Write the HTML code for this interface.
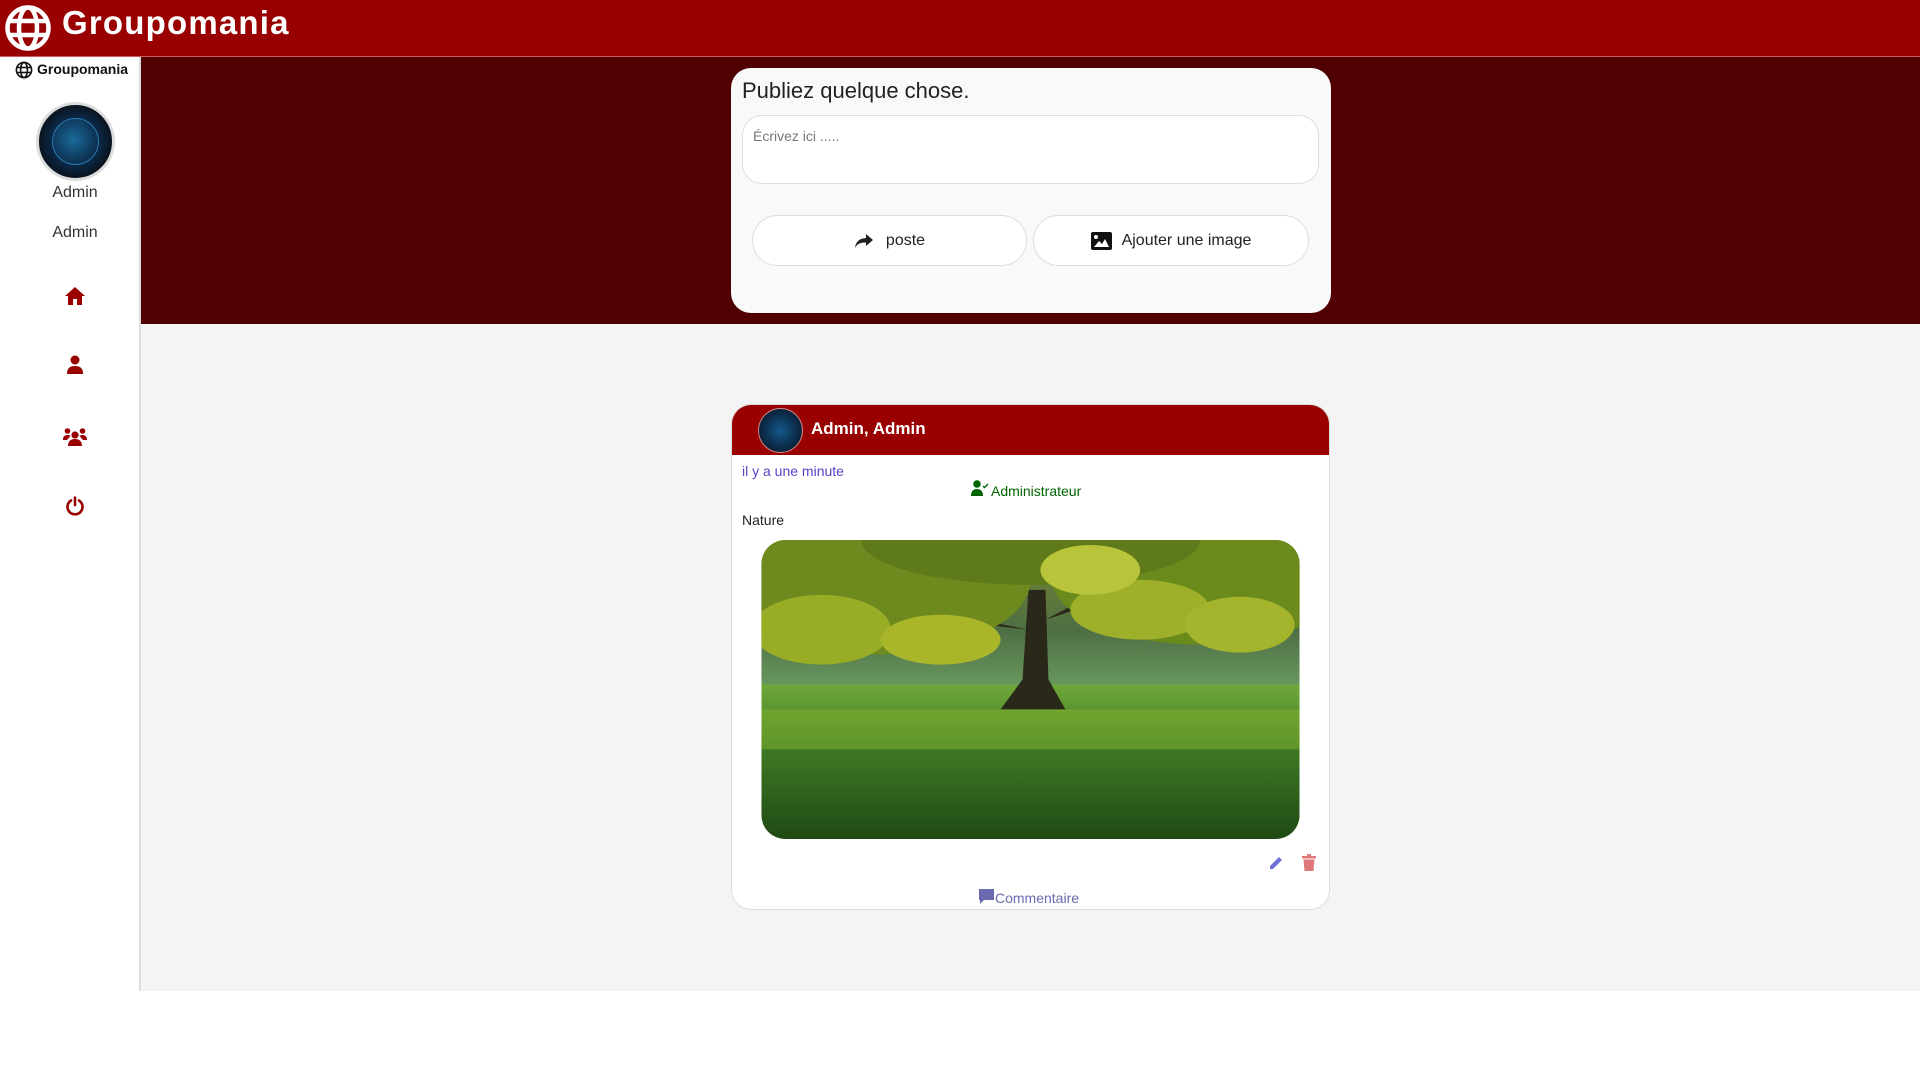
<!DOCTYPE html>
<html><head><meta charset="utf-8">
<style>
*{box-sizing:border-box;margin:0;padding:0}
body{width:1920px;height:1080px;background:#fff;font-family:"Liberation Sans",sans-serif;position:relative;overflow:hidden}
.abs{position:absolute}
#hdr{left:0;top:0;width:1920px;height:57px;background:#990000;border-bottom:1px solid #c86060}
#side{left:0;top:57px;width:141px;height:934px;background:#fff;border-right:2px solid #ddd}
#band{left:141px;top:57px;width:1779px;height:267px;background:#500000}
#gray{left:141px;top:324px;width:1779px;height:667px;background:#f4f4f4}
.t{white-space:nowrap}
.card{background:#f9f9f9;border-radius:20px}
.btn{background:#fff;border:1px solid #ddd;border-radius:26px;display:flex;align-items:center;justify-content:center;font-size:16px;color:#222}
</style></head><body>
<div id="hdr" class="abs">
  <svg class="abs" style="left:5px;top:5px" width="46" height="46" viewBox="0 0 46 46" fill="none" stroke="#fff" stroke-width="4.5">
    <circle cx="23" cy="23" r="20.5"/><ellipse cx="23" cy="23" rx="9" ry="20.5"/><line x1="3" y1="16" x2="43" y2="16"/><line x1="3" y1="30" x2="43" y2="30"/>
  </svg>
  <div class="abs t" style="left:62px;top:4px;font-size:33px;font-weight:bold;color:#fff;letter-spacing:1.2px">Groupomania</div>
</div>
<div id="side" class="abs">
  <svg class="abs" style="left:15px;top:4px" width="18" height="18" viewBox="0 0 18 18" fill="none" stroke="#111" stroke-width="1.6">
    <circle cx="9" cy="9" r="7.6"/><ellipse cx="9" cy="9" rx="3.4" ry="7.6"/><line x1="1.5" y1="6.5" x2="16.5" y2="6.5"/><line x1="1.5" y1="11.5" x2="16.5" y2="11.5"/>
  </svg>
  <div class="abs t" style="left:37px;top:4px;font-size:14px;font-weight:bold;color:#111">Groupomania</div>
  <div class="abs" style="left:36px;top:45px;width:79px;height:79px;border-radius:50%;border:3px solid #ddd;background:radial-gradient(circle at 50% 50%,#0d4a78 0,#0a2a48 45%,#0a1420 70%,#06080c 100%)"></div>
  <div class="abs" style="left:52px;top:61px;width:47px;height:47px;border-radius:50%;border:1px solid #2a7ab0;background:radial-gradient(circle at 45% 45%,#1a6a9a,#0c3050 70%)"></div>
  <div class="abs t" style="left:0;width:150px;text-align:center;top:127px;font-size:16px;color:#333">Admin</div>
  <div class="abs t" style="left:0;width:150px;text-align:center;top:167px;font-size:16px;color:#333">Admin</div>
  <svg class="abs" style="left:64px;top:229px" width="22" height="20" viewBox="0 0 22 20" fill="#990000"><path d="M11 1L1 10h3v9h5v-6h4v6h5v-9h3z"/></svg>
  <svg class="abs" style="left:66px;top:298px" width="18" height="20" viewBox="0 0 18 20" fill="#990000"><circle cx="9" cy="5" r="4.5"/><path d="M1 19c0-6 3-8 8-8s8 2 8 8z"/></svg>
  <svg class="abs" style="left:63px;top:370px" width="24" height="20" viewBox="0 0 24 20" fill="#990000"><circle cx="4.5" cy="4" r="2.8"/><circle cx="19.5" cy="4" r="2.8"/><circle cx="12" cy="8" r="3.6"/><path d="M0 13c0-4 2-5 5-5 1 0 2 .5 2.5 1L4 13zM24 13c0-4-2-5-5-5-1 0-2 .5-2.5 1L20 13zM5 19c0-5 3-7 7-7s7 2 7 7z"/></svg>
  <svg class="abs" style="left:65px;top:439px" width="20" height="20" viewBox="0 0 20 20" fill="none" stroke="#990000" stroke-width="2.6" stroke-linecap="round"><path d="M6 4.5A7.5 7.5 0 1 0 14 4.5"/><line x1="10" y1="1.5" x2="10" y2="9"/></svg>
</div>
<div id="band" class="abs"></div>
<div id="gray" class="abs"></div>

<div class="abs card" style="left:731px;top:68px;width:600px;height:245px">
  <div class="abs t" style="left:11px;top:10px;font-size:22px;color:#222">Publiez quelque chose.</div>
  <div class="abs" style="left:11px;top:47px;width:577px;height:69px;background:#fff;border:1px solid #ddd;border-radius:20px">
    <div class="abs t" style="left:10px;top:12px;font-size:14px;color:#777">Écrivez ici .....</div>
  </div>
  <div class="abs btn" style="left:21px;top:147px;width:275px;height:51px">
    <svg width="20" height="16" viewBox="0 0 20 16" fill="#222" style="margin-right:12px"><path d="M12 1l7 6-7 6V9.5C6 9.5 3 11 1 15c.5-6 4-9.5 11-10z"/></svg>poste</div>
  <div class="abs btn" style="left:302px;top:147px;width:276px;height:51px">
    <svg width="21" height="18" viewBox="0 0 21 18" style="margin-right:10px"><rect x="0" y="0" width="21" height="18" rx="2" fill="#111"/><circle cx="5" cy="5" r="2" fill="#fff"/><path d="M3 15l5-6 3 3 3-5 4 8z" fill="#fff"/></svg>Ajouter une image</div>
</div>

<div class="abs" style="left:731px;top:404px;width:599px;height:506px;background:#fff;border:1px solid #ddd;border-radius:20px;overflow:hidden">
  <div class="abs" style="left:0;top:0;width:599px;height:50px;background:#990000"></div>
  <div class="abs" style="left:26px;top:3px;width:45px;height:45px;border-radius:50%;border:1px solid #c88;background:radial-gradient(circle at 50% 50%,#145a8a 0,#0c3050 50%,#070c14 100%)"></div>
  <div class="abs t" style="left:79px;top:14px;font-size:17px;font-weight:bold;color:#fff">Admin, Admin</div>
  <div class="abs t" style="left:10px;top:58px;font-size:14px;color:#5a3fc8">il y a une minute</div>
  <svg class="abs" style="left:239px;top:75px" width="18" height="17" viewBox="0 0 18 17" fill="#006400"><circle cx="6" cy="4" r="3.8"/><path d="M0 16c0-5 2.5-7 6-7s6 2 6 7z"/><path d="M12 6l1.5 1.5L17 4" stroke="#006400" stroke-width="1.4" fill="none"/></svg>
  <div class="abs t" style="left:259px;top:78px;font-size:14px;color:#006400">Administrateur</div>
  <div class="abs t" style="left:10px;top:107px;font-size:14px;color:#222">Nature</div>
  <svg class="abs" style="left:29px;top:135px" width="539" height="299" viewBox="0 0 540 300">
    <defs>
      <clipPath id="c"><rect width="540" height="300" rx="24"/></clipPath>
      <linearGradient id="g" x1="0" y1="0" x2="0" y2="1"><stop offset="0" stop-color="#6fa83a"/><stop offset="0.4" stop-color="#3f7a24"/><stop offset="1" stop-color="#1f4a14"/></linearGradient>
      <linearGradient id="bg" x1="0" y1="0" x2="0" y2="1"><stop offset="0" stop-color="#7a8a30"/><stop offset="0.6" stop-color="#4e6e44"/><stop offset="1" stop-color="#6a9a60"/></linearGradient>
    </defs>
    <g clip-path="url(#c)">
      <rect width="540" height="150" fill="url(#bg)"/>
      <rect y="145" width="540" height="155" fill="url(#g)"/>
      <rect y="170" width="540" height="40" fill="#8ab830" opacity="0.45"/>
      <path d="M268 50 L285 50 L288 140 L305 170 L240 170 L262 140Z" fill="#2a2818"/>
      <path d="M268 90 L170 70 L110 100 L180 80Z M285 80 L360 40 L430 55 L360 55Z M270 60 L200 20 L220 20Z" fill="#2a2818"/>
      <ellipse cx="110" cy="40" rx="160" ry="75" fill="#6e8a1e"/>
      <ellipse cx="440" cy="35" rx="150" ry="70" fill="#6a8a1c"/>
      <ellipse cx="270" cy="0" rx="170" ry="45" fill="#5e7a1a"/>
      <ellipse cx="60" cy="90" rx="70" ry="35" fill="#98ac26"/>
      <ellipse cx="180" cy="100" rx="60" ry="25" fill="#aab62a"/>
      <ellipse cx="380" cy="70" rx="70" ry="30" fill="#9eb02a"/>
      <ellipse cx="480" cy="85" rx="55" ry="28" fill="#a4b42c"/>
      <ellipse cx="330" cy="30" rx="50" ry="25" fill="#b8c43a"/>
    </g>
  </svg>
  <svg class="abs" style="left:536px;top:450px" width="16" height="16" viewBox="0 0 16 16" fill="#7070d8"><path d="M2 11L11 2l3 3-9 9H2z"/></svg>
  <svg class="abs" style="left:570px;top:449px" width="14" height="17" viewBox="0 0 14 17" fill="#e07a7a"><rect x="0" y="2" width="14" height="2.5"/><rect x="5" y="0" width="4" height="2"/><path d="M1.5 5.5h11L11.5 17h-9z"/></svg>
  <svg class="abs" style="left:246px;top:483px" width="17" height="17" viewBox="0 0 17 17" fill="#6a6ab0"><path d="M1 1h15v11H6l-4 4v-4H1z"/></svg>
  <div class="abs t" style="left:263px;top:485px;font-size:14px;color:#6a6ab0">Commentaire</div>
</div>
</body></html>
